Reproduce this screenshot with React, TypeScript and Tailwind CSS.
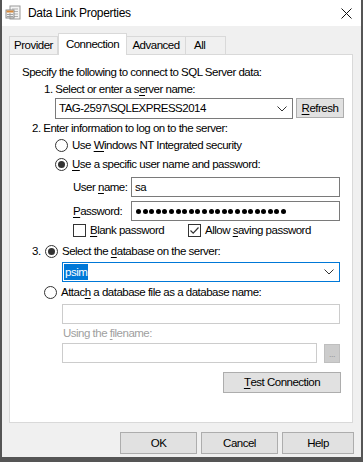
import React from 'react';

const font = { fontFamily: '"Liberation Sans", Arial, sans-serif' };

function U({ children }: { children: React.ReactNode }) {
  return <span className="underline underline-offset-[2px] decoration-[1px]">{children}</span>;
}

function Radio({ checked = false }: { checked?: boolean }) {
  return (
    <span className="w-[13px] h-[13px] rounded-full border border-[#333] bg-white flex items-center justify-center shrink-0">
      {checked && <span className="w-[7px] h-[7px] rounded-full bg-[#333]" />}
    </span>
  );
}

function Check({ checked = false }: { checked?: boolean }) {
  return (
    <span className="w-[13px] h-[13px] border border-[#333] bg-white flex items-center justify-center shrink-0">
      {checked && (
        <svg width="11" height="11" viewBox="0 0 11 11">
          <path d="M1.5 5.5 L4.2 8.2 L9.5 2.5" fill="none" stroke="#333" strokeWidth="1.2" />
        </svg>
      )}
    </span>
  );
}

function Chevron() {
  return (
    <svg width="10" height="6" viewBox="0 0 10 6" className="shrink-0">
      <path d="M0.5 0.5 L5 5 L9.5 0.5" fill="none" stroke="#333" strokeWidth="1" />
    </svg>
  );
}

function Button({ children, className = '' }: { children: React.ReactNode; className?: string }) {
  return (
    <div className={`bg-[#e1e1e1] border border-[#adadad] flex items-center justify-center text-black ${className}`}>
      {children}
    </div>
  );
}

export default function App() {
  return (
    <div style={font} className="w-[363px] h-[462px] bg-[#f0f0f0] flex flex-col border-l-2 border-r-2 border-b-[5px] border-[#555] text-[11.5px] tracking-[-0.5px] text-black leading-[13px] whitespace-nowrap">
      {/* title bar */}
      <div className="h-[26px] bg-white flex items-center shrink-0">
        <svg width="16" height="16" viewBox="0 0 16 16" className="ml-[3px]">
          <rect x="5" y="1" width="10" height="13" fill="#f4f4f4" stroke="#9a9a9a" />
          <path d="M7 4h6M7 6.5h6M7 9h6M7 11.5h6" stroke="#b0b0b0" />
          <rect x="1" y="5" width="8" height="8" fill="#f2f2f2" stroke="#8a8a8a" />
          <rect x="1.5" y="5.5" width="7" height="2" fill="#d88a3c" />
          <path d="M2 9.5h6M2 11.5h6M5 8v5" stroke="#a0a0a0" />
        </svg>
        <span className="ml-[7px] text-[12px] tracking-[-0.3px]">Data Link Properties</span>
        <svg width="11" height="11" viewBox="0 0 11 11" className="ml-auto mr-[9px]">
          <path d="M0.5 0.5 L10.5 10.5 M10.5 0.5 L0.5 10.5" stroke="#111" strokeWidth="1" />
        </svg>
      </div>

      {/* tabs */}
      <div className="mt-[7px] h-[21px] ml-[7px] flex items-end shrink-0 relative z-10">
        <div className="h-[18px] w-[49px] border border-b-0 border-[#d9d9d9] bg-[#f0f0f0] flex items-center justify-center">Provider</div>
        <div className="h-[22px] w-[69px] -mb-px border border-b-0 border-[#d9d9d9] bg-white flex items-center justify-center">Connection</div>
        <div className="h-[18px] w-[59px] border border-b-0 border-l-0 border-[#d9d9d9] bg-[#f0f0f0] flex items-center justify-center">Advanced</div>
        <div className="h-[18px] w-[40px] border border-b-0 border-l-0 border-[#d9d9d9] bg-[#f0f0f0] flex items-center pl-[8px]">All</div>
      </div>

      {/* panel */}
      <div className="ml-[7px] w-[344px] h-[369px] border border-[#d9d9d9] bg-white flex flex-col shrink-0">
        <div className="mt-[11px] pl-[12px] h-[13px]">Specify the following to connect to SQL Server data:</div>
        <div className="mt-[4px] pl-[34px] h-[13px]">1. Select or enter a s<U>e</U>rver name:</div>
        <div className="mt-[2px] pl-[45px] flex items-start gap-[3px]">
          <div className="w-[238px] h-[21px] border border-[#7a7a7a] flex items-center pl-[3px] pr-[5px]">
            <span>TAG-2597\SQLEXPRESS2014</span>
            <span className="ml-auto"><Chevron /></span>
          </div>
          <Button className="w-[48px] h-[20px]"><U>R</U>efresh</Button>
        </div>
        <div className="mt-[3px] pl-[22px] h-[13px]">2. Enter information to log on to the server:</div>
        <div className="mt-[4px] pl-[45px] h-[13px] flex items-center gap-[4px]">
          <Radio />
          <span>Use <U>W</U>indows NT Integrated security</span>
        </div>
        <div className="mt-[6px] pl-[45px] h-[13px] flex items-center gap-[4px]">
          <Radio checked />
          <span><U>U</U>se a specific user name and password:</span>
        </div>
        <div className="mt-[6px] pl-[63px] flex items-center">
          <span className="w-[58px]">User <U>n</U>ame:</span>
          <div className="w-[209px] h-[20px] border border-[#7a7a7a] flex items-center pl-[3px]">sa</div>
        </div>
        <div className="mt-[4px] pl-[63px] flex items-center">
          <span className="w-[58px]"><U>P</U>assword:</span>
          <div className="w-[209px] h-[20px] border border-[#7a7a7a] flex items-center pl-[4px] gap-[1.6px]">
            {Array.from({ length: 23 }).map((_, i) => (
              <span key={i} className="w-[5px] h-[5px] rounded-full bg-black shrink-0" />
            ))}
          </div>
        </div>
        <div className="mt-[3px] pl-[63px] h-[13px] flex items-center">
          <Check />
          <span className="ml-[4px] w-[98px]"><U>B</U>lank password</span>
          <Check checked />
          <span className="ml-[4px]">Allow <U>s</U>aving password</span>
        </div>
        <div className="mt-[8px] pl-[22px] h-[13px] flex items-center">
          <span className="w-[13px]">3.</span>
          <Radio checked />
          <span className="ml-[4px]">Select the <U>d</U>atabase on the server:</span>
        </div>
        <div className="mt-[4px] pl-[52px]">
          <div className="w-[278px] h-[20px] border border-[#0078d7] flex items-center pl-[1px] pr-[5px]">
            <span className="bg-[#0078d7] text-white px-[1px] h-[16px] leading-[16px]">psim</span>
            <span className="ml-auto"><Chevron /></span>
          </div>
        </div>
        <div className="mt-[4px] pl-[34px] h-[13px] flex items-center gap-[4px]">
          <Radio />
          <span>Attac<U>h</U> a database file as a database name:</span>
        </div>
        <div className="mt-[5px] pl-[52px]">
          <div className="w-[278px] h-[20px] border border-[#cccccc] bg-white" />
        </div>
        <div className="mt-[3px] pl-[53px] h-[13px] text-[#a0a0a0]">Using the <U>f</U>ilename:</div>
        <div className="mt-[3px] pl-[52px] flex items-center">
          <div className="w-[255px] h-[20px] border border-[#cccccc] bg-white" />
          <div className="ml-[7px] w-[16px] h-[19px] bg-[#cccccc] border border-[#bfbfbf] flex items-end justify-center pb-[3px] text-[9px] text-[#999] leading-[9px]">...</div>
        </div>
        <div className="mt-[9px] pl-[213px]">
          <Button className="w-[118px] h-[21px]"><U>T</U>est Connection</Button>
        </div>
      </div>

      {/* bottom buttons */}
      <div className="mt-[9px] ml-[118px] flex gap-[4px] shrink-0">
        <Button className="w-[77px] h-[22px]">OK</Button>
        <Button className="w-[77px] h-[22px]">Cancel</Button>
        <Button className="w-[72px] h-[22px]">Help</Button>
      </div>
    </div>
  );
}
